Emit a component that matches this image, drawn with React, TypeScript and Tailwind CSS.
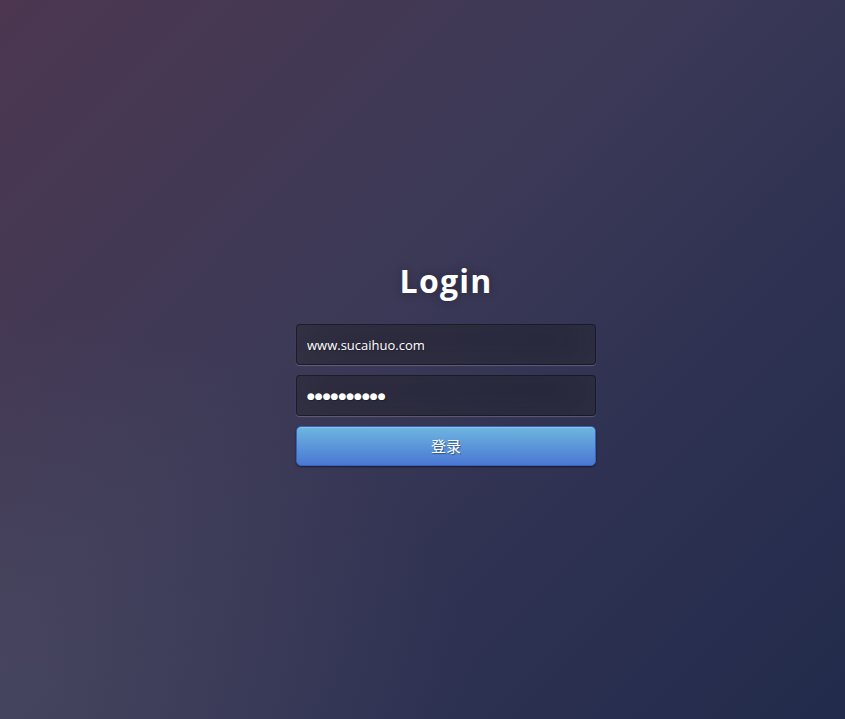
import React from "react";

export default function App() {
  return (
    <div
      className="relative h-screen w-full overflow-hidden bg-[#383a58] bg-[radial-gradient(ellipse_at_0%_100%,rgba(100,100,115,0.25)_5%,rgba(100,100,115,0)_40%),linear-gradient(135deg,#4c3650_0%,#3d3a57_40%,#2e3152_70%,#222b4b_100%)] font-['Open_Sans',sans-serif]"
    >
      <div className="ml-[296px] flex w-[300px] flex-col pt-[259px]">
        <h1 className="m-0 text-center text-[32px] font-bold leading-[44px] tracking-[1.2px] text-white [text-shadow:0_0_10px_rgba(0,0,0,0.3)]">
          Login
        </h1>

        <form className="mt-[21px] flex flex-col" onSubmit={e => e.preventDefault()}>
          <input
            type="text"
            defaultValue="www.sucaihuo.com"
            className="mb-[10px] h-[41px] w-full rounded-[4px] border border-[rgba(0,0,0,0.3)] bg-[rgba(0,0,0,0.3)] px-[10px] text-[13px] text-white outline-none shadow-[inset_0_-5px_45px_rgba(100,100,100,0.2),0_1px_1px_rgba(255,255,255,0.2)] [text-shadow:1px_1px_1px_rgba(0,0,0,0.3)]"
          />
          <input
            type="text"
            defaultValue="●●●●●●●●●●"
            className="mb-[10px] h-[41px] w-full rounded-[4px] border border-[rgba(0,0,0,0.3)] bg-[rgba(0,0,0,0.3)] px-[10px] font-['DejaVu_Sans',sans-serif] text-[9px] text-white outline-none shadow-[inset_0_-5px_45px_rgba(100,100,100,0.2),0_1px_1px_rgba(255,255,255,0.2)] [text-shadow:1px_1px_1px_rgba(0,0,0,0.3)]"
          />
          <button
            type="submit"
            className="block h-[40px] w-full rounded-[5px] border border-[#3762bc] bg-[#4a77d4] bg-[linear-gradient(to_bottom,#6eb6de,#4a77d4)] text-[15px] text-white shadow-[inset_0_1px_0_rgba(255,255,255,0.2),0_1px_2px_rgba(0,0,0,0.5)] [text-shadow:1px_1px_1px_rgba(0,0,0,0.4)] font-['Noto_Sans_CJK_SC',sans-serif]"
          >
            登录
          </button>
        </form>
      </div>
    </div>
  );
}
